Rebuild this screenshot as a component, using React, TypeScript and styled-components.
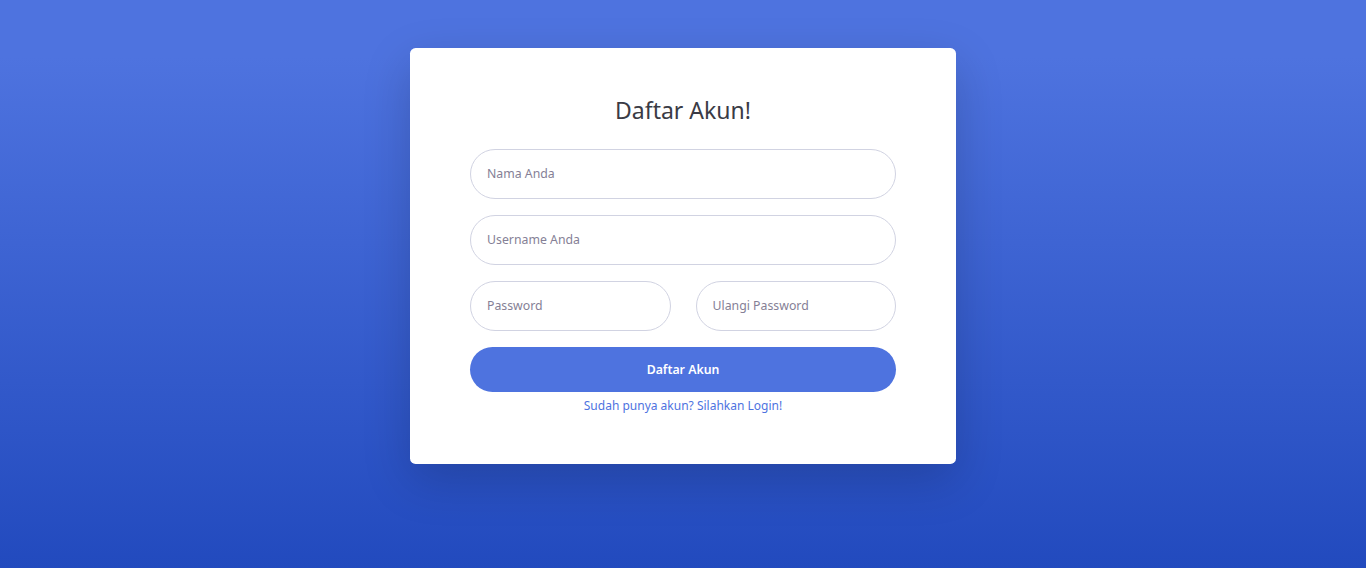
import React from "react";
import styled, { createGlobalStyle } from "styled-components";

const Global = createGlobalStyle`
  html, body { margin: 0; padding: 0; }
  body {
    min-height: 100vh;
    background: linear-gradient(180deg, #4e73df 10%, #224abe 100%);
    font-family: "Noto Sans", "Open Sans", sans-serif;
  }
  * { box-sizing: border-box; }
`;

const Page = styled.div`
  min-height: 100vh;
  display: flex;
  justify-content: center;
  align-items: flex-start;
  padding-top: 48px;
`;

const Card = styled.div`
  width: 546px;
  background: #fff;
  border-radius: 5.6px;
  box-shadow: 0 16px 48px rgba(0, 0, 0, 0.175);
  padding: 48px 60px 50px;
`;

const Title = styled.h1`
  margin: 0 0 24px;
  text-align: center;
  font-size: 23px;
  font-weight: 400;
  line-height: 28.8px;
  color: #3a3b45;
`;

const Form = styled.form`
  display: flex;
  flex-direction: column;
  gap: 16px;
`;

const Pair = styled.div`
  display: grid;
  grid-template-columns: 1fr 1fr;
  gap: 25px;
`;

const Input = styled.input`
  width: 100%;
  height: 50px;
  padding: 0 16px;
  border: 1px solid #d1d3e2;
  border-radius: 160px;
  font-family: inherit;
  font-size: 12.3px;
  color: #6e707e;
  outline: none;
  background: #fff;
  &::placeholder { color: #857f96; }
`;

const Button = styled.button`
  width: 100%;
  height: 45px;
  border: none;
  border-radius: 160px;
  background: #4e73df;
  color: #fff;
  font-family: inherit;
  font-size: 12.3px;
  font-weight: 600;
  cursor: pointer;
`;

const Footer = styled.div`
  text-align: center;
  margin-top: -12px;
  line-height: 17px;
`;

const Link = styled.a`
  color: #4e73df;
  font-size: 12px;
  text-decoration: none;
`;

export default function App() {
  return (
    <>
      <Global />
      <Page>
        <Card>
          <Title>Daftar Akun!</Title>
          <Form onSubmit={(e) => e.preventDefault()}>
            <Input placeholder="Nama Anda" />
            <Input placeholder="Username Anda" />
            <Pair>
              <Input type="password" placeholder="Password" />
              <Input type="password" placeholder="Ulangi Password" />
            </Pair>
            <Button type="submit">Daftar Akun</Button>
            <Footer>
              <Link href="#">Sudah punya akun? Silahkan Login!</Link>
            </Footer>
          </Form>
        </Card>
      </Page>
    </>
  );
}
